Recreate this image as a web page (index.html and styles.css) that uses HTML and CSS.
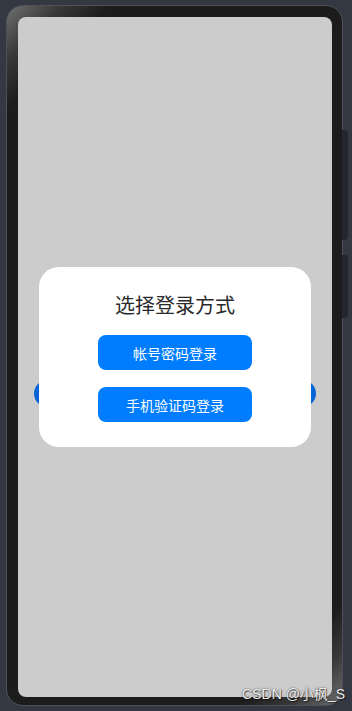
FILE: index.html
```html
<!DOCTYPE html>
<html lang="zh">
<head>
<meta charset="utf-8">
<title>选择登录方式</title>
<link rel="stylesheet" href="styles.css">
</head>
<body>
  <div class="phone">
    <div class="side-key key-a"></div>
    <div class="side-key key-b"></div>
    <div class="screen">
      <div class="pill"></div>
      <div class="dialog">
        <div class="dialog-title">选择登录方式</div>
        <button class="dialog-btn">帐号密码登录</button>
        <button class="dialog-btn">手机验证码登录</button>
      </div>
    </div>
  </div>
  <div class="watermark">CSDN @小枫_S</div>
</body>
</html>
```
FILE: styles.css
```css
html, body {
  margin: 0;
  padding: 0;
}
body {
  width: 352px;
  height: 711px;
  background: #333843;
  padding: 5px 0 0 6px;
  box-sizing: border-box;
  position: relative;
  overflow: hidden;
  font-family: "Noto Sans CJK SC", "Noto Sans", sans-serif;
}
.phone {
  position: relative;
  width: 337px;
  height: 701px;
  box-sizing: border-box;
  padding: 11px 10px 8px 11px;
  border-radius: 17px;
  border: 1px solid #4e5157;
  background: linear-gradient(135deg, #707070 0%, #3a3a3a 5%, #1c1c1c 10%, #1c1c1c 90%, #3a3a3a 95%, #707070 100%);
}
.side-key {
  position: absolute;
  left: 100%;
  width: 6px;
  background: #23262d;
  border-radius: 0 4px 4px 0;
}
.key-a { top: 124px; height: 110px; }
.key-b { top: 249px; height: 63px; }
.screen {
  position: relative;
  width: 314px;
  height: 680px;
  box-sizing: border-box;
  background: #cccccc;
  border-radius: 8px;
  padding-top: 363px;
}
.pill {
  margin: 0 16px;
  height: 27px;
  border-radius: 14px;
  background: #0a64d8;
}
.dialog {
  position: absolute;
  left: 21px;
  top: 250px;
  width: 272px;
  box-sizing: border-box;
  background: #ffffff;
  border-radius: 20px;
  padding: 24px 0 8px;
  display: flex;
  flex-direction: column;
  align-items: center;
}
.dialog-title {
  font-size: 20px;
  line-height: 28px;
  color: #2a2a2a;
  margin-bottom: 16px;
}
.dialog-btn {
  flex-shrink: 0;
  width: 154px;
  height: 35px;
  border: none;
  border-radius: 8px;
  background: #007dff;
  color: #ffffff;
  font-family: "Noto Sans CJK SC", "Noto Sans", sans-serif;
  font-size: 14px;
  padding: 0;
  margin-bottom: 17px;
}
.watermark {
  position: absolute;
  right: 7px;
  bottom: 8px;
  font-family: "Liberation Sans", "Noto Sans CJK SC", sans-serif;
  font-size: 14px;
  color: #ececec;
  text-shadow: 0 0 2px rgba(0,0,0,0.7), 1px 1px 1px rgba(0,0,0,0.5);
}
```
